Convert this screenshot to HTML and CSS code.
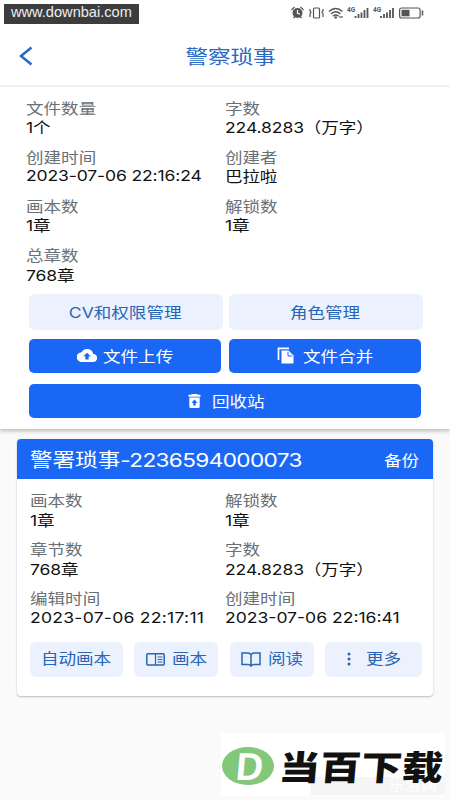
FILE: index.html
```html
<!DOCTYPE html>
<html lang="zh-CN">
<head>
<meta charset="utf-8">
<title>警察琐事</title>
<link rel="stylesheet" href="styles.css">
</head>
<body>
<div class="site-tag"><span>www.downbai.com</span></div>
<header class="top">
  <div class="status">
    <svg width="136" height="16" viewBox="0 0 136 16" fill="none" stroke="#555" stroke-width="1.2">
      <circle cx="7.500" cy="8" r="5" fill="#555" stroke="none"/>
      <path d="M1.500 5l3-3M10.500 2l3 3M3.500 13l2-2M11.500 13l-2-2"/><path d="M7.500 5v3.300l2.500 1" stroke="#fff"/>
      <rect x="23.500" y="3" width="6" height="10" rx="1"/><path d="M20 4v2l1 1-1 2v3M33 4v2l-1 1 1 2v3"/>
      <path stroke-width="1.500" d="M39 6.500q6.500-6 13.500 0M41 9q4.500-4.500 9.500 0M43 11.200q2.500-2.400 5.500 0"/><circle cx="45.700" cy="12.500" r="1.200" fill="#555" stroke="none"/><path d="M49 12h4"/>
      <g fill="#555" stroke="none" font-family="Roboto, sans-serif" font-size="6.500" font-weight="700"><text x="57" y="7">4G</text><text x="83" y="7">4G</text></g>
      <path stroke-width="1.800" d="M65.500 13v-2M68.500 13v-4M71.500 13V7.500M74.500 13V5M77.500 13V3M91 13v-2M94 13v-4M97 13V7.500M100 13V5M103 13V3"/>
      <rect x="109.600" y="3" width="20.500" height="10" rx="2"/><rect x="111.500" y="4.800" width="8" height="6.500" fill="#555" stroke="none"/><path d="M132.500 5.500v5" stroke-width="1.500"/>
    </svg>
  </div>
  <div class="nav">
    <svg class="back" width="14" height="20" viewBox="0 0 14 20"><path d="M12.500 1.500L2 10l10.500 8.500" fill="none" stroke="#2869c4" stroke-width="2.500"/></svg>
    <h1><span class="mid">警察琐事</span></h1>
  </div>
</header>
<section class="summary">
  <dl class="facts">
    <div><dt>文件数量</dt><dd>1个</dd></div>
    <div><dt>字数</dt><dd>224.8283（万字）</dd></div>
    <div><dt>创建时间</dt><dd class="date tight">2023-07-06 22:16:24</dd></div>
    <div><dt>创建者</dt><dd>巴拉啦</dd></div>
    <div><dt>画本数</dt><dd>1章</dd></div>
    <div><dt>解锁数</dt><dd>1章</dd></div>
    <div><dt>总章数</dt><dd>768章</dd></div>
  </dl>
  <div class="actions">
    <div class="pair light"><button class="soft"><span class="mid">CV和权限管理</span></button><button class="soft"><span class="mid">角色管理</span></button></div>
    <div class="pair">
      <button class="solid"><svg width="20" height="13" viewBox="0 0 24 16" preserveAspectRatio="none"><path fill="#fff" d="M19.400 6A7.500 7.500 0 0 0 5.400 4 6 6 0 0 0 6 16h13a5 5 0 0 0 .4-10z"/><path fill="#1b67f5" d="M14 9v3.800h-4V9H7.500L12 4.500 16.500 9z"/></svg><b><span class="start">文件上传</span></b></button>
      <button class="solid"><svg width="17" height="17" viewBox="0 0 17 17"><path d="M1.500 13V1.300H12" fill="none" stroke="#fff" stroke-width="1.700"/><path fill="#fff" d="M4.500 3.500h7l5 5V16.500h-12z"/><path d="M11 4.800V9h4.300" fill="none" stroke="#1b67f5" stroke-width="1"/></svg><b class="merge"><span class="start">文件合并</span></b></button>
    </div>
    <button class="solid recycle"><svg width="13" height="14" viewBox="0 0 13 14"><path fill="#fff" d="M4 0h5l1 .8h2.500v2H.5v-2H3zM1.300 3.600h10.400v8.900q0 1.500-1.500 1.500H2.800q-1.500 0-1.500-1.500z"/><path fill="#1b67f5" d="M6.500 5.500L9.500 9H7.700v2.500H5.300V9H3.500z"/></svg><b class="bin"><span class="start">回收站</span></b></button>
  </div>
</section>
<section class="card">
  <div class="card-head"><h2>警署琐事<span class="serial">-2236594000073</span></h2><span class="backup">备份</span></div>
  <dl class="facts">
    <div><dt>画本数</dt><dd>1章</dd></div>
    <div><dt>解锁数</dt><dd>1章</dd></div>
    <div><dt>章节数</dt><dd>768章</dd></div>
    <div><dt>字数</dt><dd>224.8283（万字）</dd></div>
    <div><dt>编辑时间</dt><dd class="date loose">2023-07-06 22:17:11</dd></div>
    <div><dt>创建时间</dt><dd class="date">2023-07-06 22:16:41</dd></div>
  </dl>
  <div class="tools">
    <button class="soft"><span class="mid">自动画本</span></button>
    <button class="soft"><svg width="19" height="13" viewBox="0 0 19 13" fill="none" stroke="#2865b5" stroke-width="1.500"><rect x=".8" y=".8" width="17.400" height="11.200" rx="1"/><path d="M9.500 1v11M11.500 4h5M11.500 6.500h5M11.500 9h5" stroke-width="1.200"/></svg><b class="two"><span class="start">画本</span></b></button>
    <button class="soft"><svg class="book" width="20" height="15" viewBox="0 0 20 15" fill="none" stroke="#2865b5" stroke-width="1.500"><path d="M10 3v11M10 3Q9 1 7 1H1v11.500h6q2 0 3 1.500 1-1.500 3-1.500h6V1h-6q-2 0-3 2z"/></svg><b class="two"><span class="start">阅读</span></b></button>
    <button class="soft"><svg class="dots" width="4" height="14" viewBox="0 0 4 14" fill="#2865b5"><circle cx="2" cy="2" r="1.500"/><circle cx="2" cy="7" r="1.500"/><circle cx="2" cy="12" r="1.500"/></svg><b class="two"><span class="start">更多</span></b></button>
  </div>
</section>
<div class="brand">
  <svg width="224" height="63" viewBox="0 0 224 63">
    <rect width="224" height="63" fill="#fff"/>
    <rect x="90" y="44" width="134" height="18" fill="#f5f5f5"/>
    <ellipse cx="27" cy="33" rx="26" ry="19" fill="#83c77a"/>
    <text class="letter" transform="translate(14 47) skewX(-5)" textLength="27" lengthAdjust="spacingAndGlyphs">D</text>
    <text class="ghost" x="168" y="57" textLength="48">乐游网</text>
    <text class="name" transform="translate(57 46.500) skewX(-5)" textLength="164" lengthAdjust="spacingAndGlyphs">当百下载</text>
  </svg>
</div>
</body>
</html>
```
FILE: styles.css
```css
* { box-sizing: border-box; }
body { margin: 0; width: 450px; height: 800px; overflow: hidden; position: relative; background: #fafafa; color: #111; font: 15px/19.5px Inter, "Noto Sans CJK SC", sans-serif; }
h1, h2, dl, dt, dd { margin: 0; font-weight: 400; }
button { border: 0; padding: 0; font: inherit; display: flex; align-items: center; justify-content: center; }
b { font-weight: 400; text-align: left; }
svg { flex: none; display: block; }
.site-tag { position: absolute; left: 4px; top: 4px; width: 135px; height: 20px; background: #3d3d3d; color: #eee; font: 14.600px/17px "Liberation Sans", sans-serif; padding-left: 7px; }
.top { height: 87px; background: #fff; border-bottom: 2px solid #f5f5f5; }
.status { height: 26px; padding: 5px 0 0 290px; }
.nav { height: 59px; display: flex; align-items: center; padding-left: 19px; }
.nav h1 { width: 424px; margin-left: -14px; padding-top: 2px; text-align: center; font-size: 19.300px; line-height: 28px; color: #2869c4; }
.mid { display: inline-block; transform: scaleX(1.17); }
.start { display: inline-block; transform: scaleX(1.17); transform-origin: left; }
.summary { height: 342px; background: #fff; padding-top: 11.500px; box-shadow: 0 2px 4px rgba(0,0,0,.25); }
.facts { display: grid; grid-template-columns: 199.500px 1fr; row-gap: 10.200px; padding-left: 25.600px; }
.facts dt, .facts dd { transform: scaleX(1.17); transform-origin: left; white-space: nowrap; width: 150px; }
dt { color: #6a7176; }
dd { letter-spacing: -.1px; }
.facts .date { margin: -1px 0 1px; letter-spacing: 0; }
.facts .tight { letter-spacing: -.12px; }
.facts .loose { letter-spacing: .22px; }
.actions { padding: 8.500px 27px 0 28.500px; }
.pair { display: grid; grid-template-columns: 192.500px 192.500px; gap: 7.500px; height: 34px; margin-bottom: 11px; }
.light { grid-template-columns: 194px 194px; gap: 6px; height: 36px; margin-bottom: 9px; }
.soft { background: #ebf1fd; color: #2865b5; border-radius: 6px; }
.light .soft { padding: 2px 0 0; }
.solid { background: #1b67f5; color: #fff; border-radius: 5px; gap: 7px; }
.solid b { width: 70px; padding-top: 2px; margin-left: -1px; }
.solid .merge { margin-left: 2px; }
.recycle { width: 392.500px; height: 34px; gap: 12px; padding-left: 3px; }
.solid .bin { width: 53px; }
.card { width: 415.500px; height: 257px; margin: 10px 0 0 17.300px; border-radius: 4px; overflow: hidden; background: #fff; box-shadow: 0 1px 2px rgba(0,0,0,.25); }
.card-head { height: 40px; background: #1b67f5; color: #fff; display: flex; justify-content: space-between; align-items: center; padding: 3px 14px 0 13px; }
.card-head h2 { font-size: 19.300px; transform: scaleX(1.17); transform-origin: left; white-space: nowrap; }
.serial { letter-spacing: -.52px; }
.backup { transform: scaleX(1.17); transform-origin: right; }
.card .facts { padding: 12px 0 0 12.900px; grid-template-columns: 195px 1fr; row-gap: 10px; }
.tools { display: grid; grid-template-columns: 93px 84px 84px 97px; gap: 11.500px; height: 35px; margin: 13.500px 0 0 12.700px; }
.tools .soft { gap: 7px; }
.two { width: 35px; }
.dots { margin-right: 8px; }
.brand { position: absolute; left: 221px; top: 733px; }
.letter { font: 700 39px "Liberation Sans", sans-serif; fill: #fff; }
.name { font: 900 34px "Noto Sans CJK SC", sans-serif; fill: #111; }
.ghost { font: 15px "Noto Sans CJK SC", sans-serif; fill: #fff; }
```
